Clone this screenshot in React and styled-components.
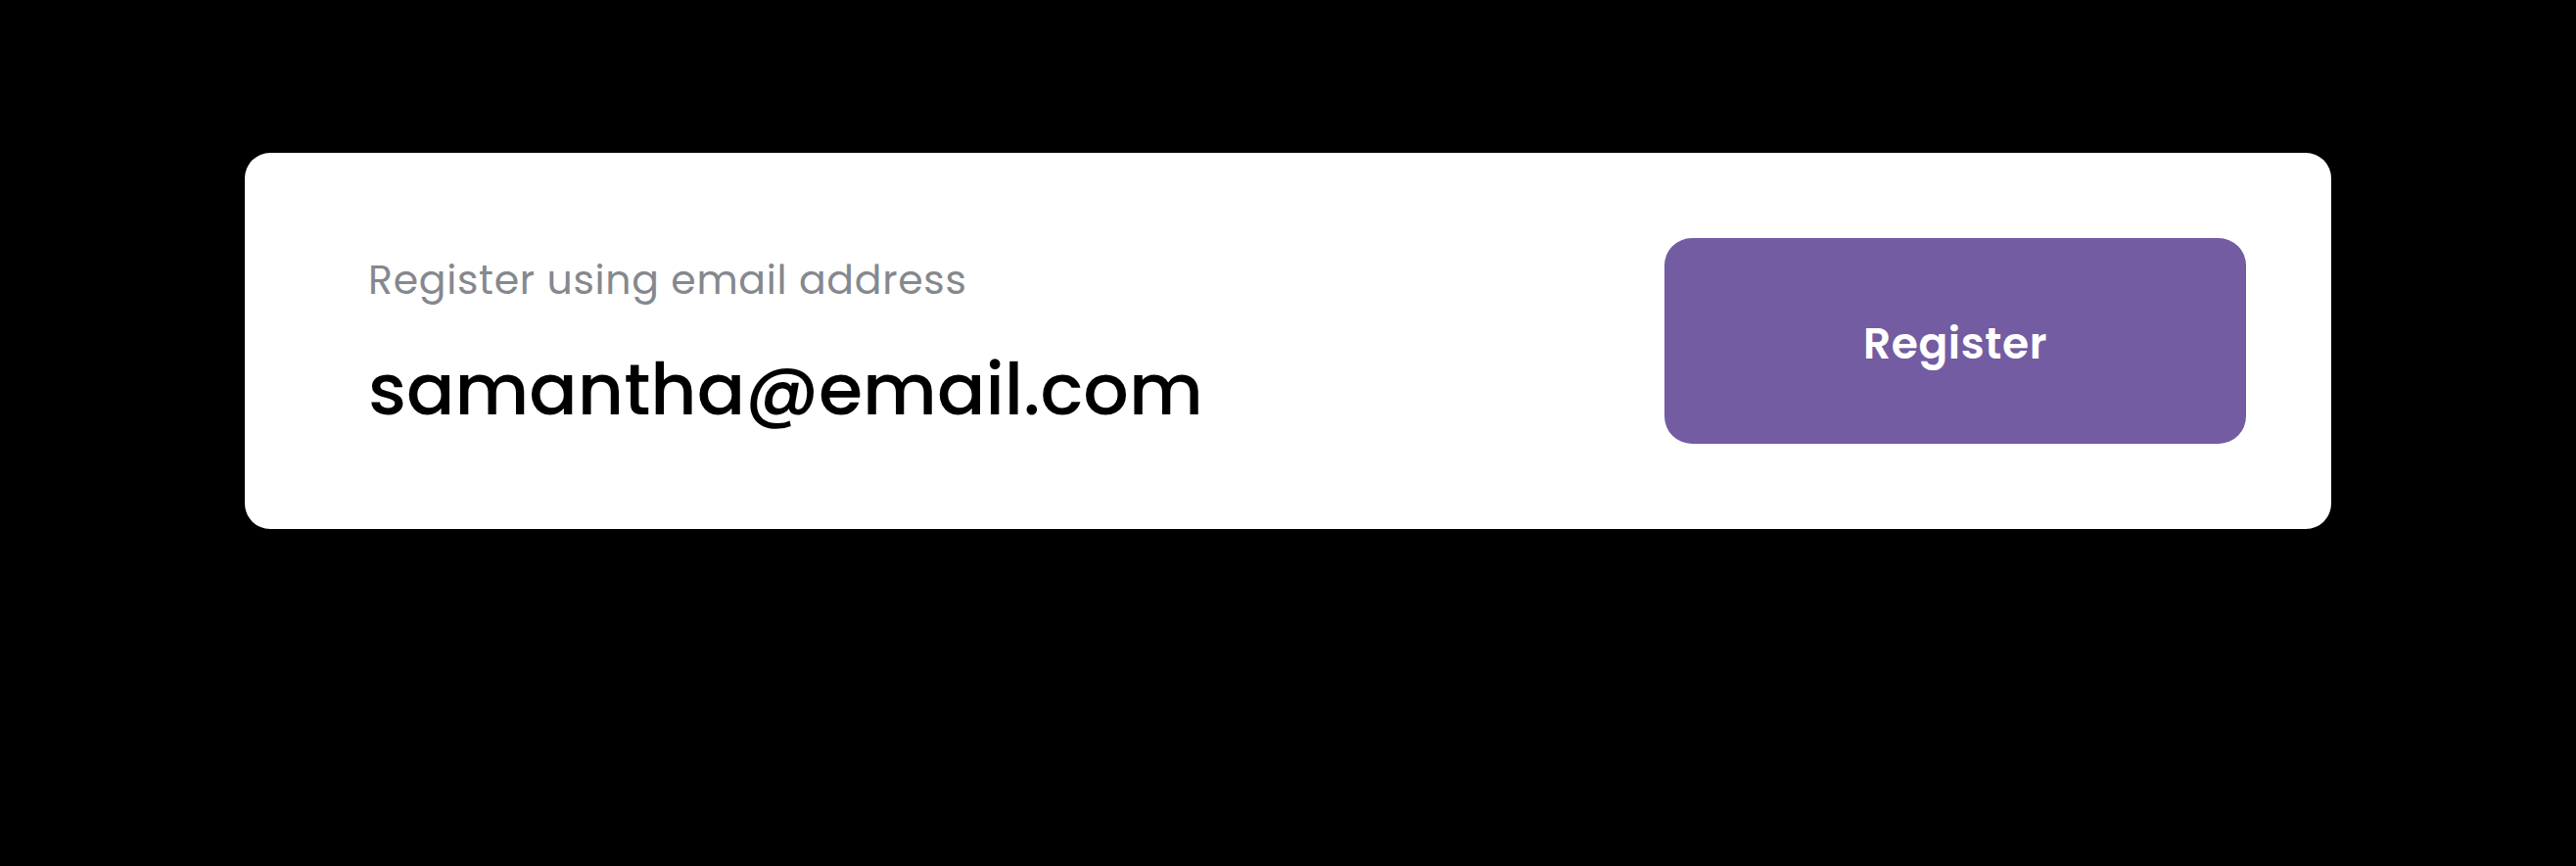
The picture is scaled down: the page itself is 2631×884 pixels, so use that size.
import React from "react";
import styled, { createGlobalStyle } from "styled-components";

const GlobalStyle = createGlobalStyle`
  html, body {
    margin: 0;
    padding: 0;
    background: #000;
  }
  body {
    font-family: "Poppins", "Open Sans", "Liberation Sans", sans-serif;
  }
`;

const Page = styled.div`
  width: 2631px;
  height: 884px;
  background: #000;
  padding: 156px 0 0 250px;
  box-sizing: border-box;
`;

const Card = styled.div`
  width: 2131px;
  height: 384px;
  box-sizing: border-box;
  background: #fff;
  border-radius: 26px;
  padding: 0 87px 0 126px;
  display: flex;
  align-items: center;
  justify-content: space-between;
`;

const Field = styled.div`
  display: flex;
  flex-direction: column;
  gap: 44px;
  margin-top: 6px;
`;

const Label = styled.div`
  font-size: 41px;
  line-height: 1.2;
  letter-spacing: 0.7px;
  color: #85888e;
  font-weight: 400;
`;

const Email = styled.div`
  font-size: 73px;
  line-height: 1.2;
  color: #000;
  font-weight: 500;
`;

const RegisterButton = styled.button`
  width: 594px;
  height: 210px;
  padding: 5px 0 0;
  border: 0;
  border-radius: 28px;
  background: #735ca2;
  color: #fff;
  font-family: inherit;
  font-size: 44px;
  letter-spacing: 0.6px;
  font-weight: 600;
  cursor: pointer;
`;

export default function App() {
  return (
    <Page>
      <GlobalStyle />
      <Card>
        <Field>
          <Label>Register using email address</Label>
          <Email>samantha@email.com</Email>
        </Field>
        <RegisterButton>Register</RegisterButton>
      </Card>
    </Page>
  );
}
